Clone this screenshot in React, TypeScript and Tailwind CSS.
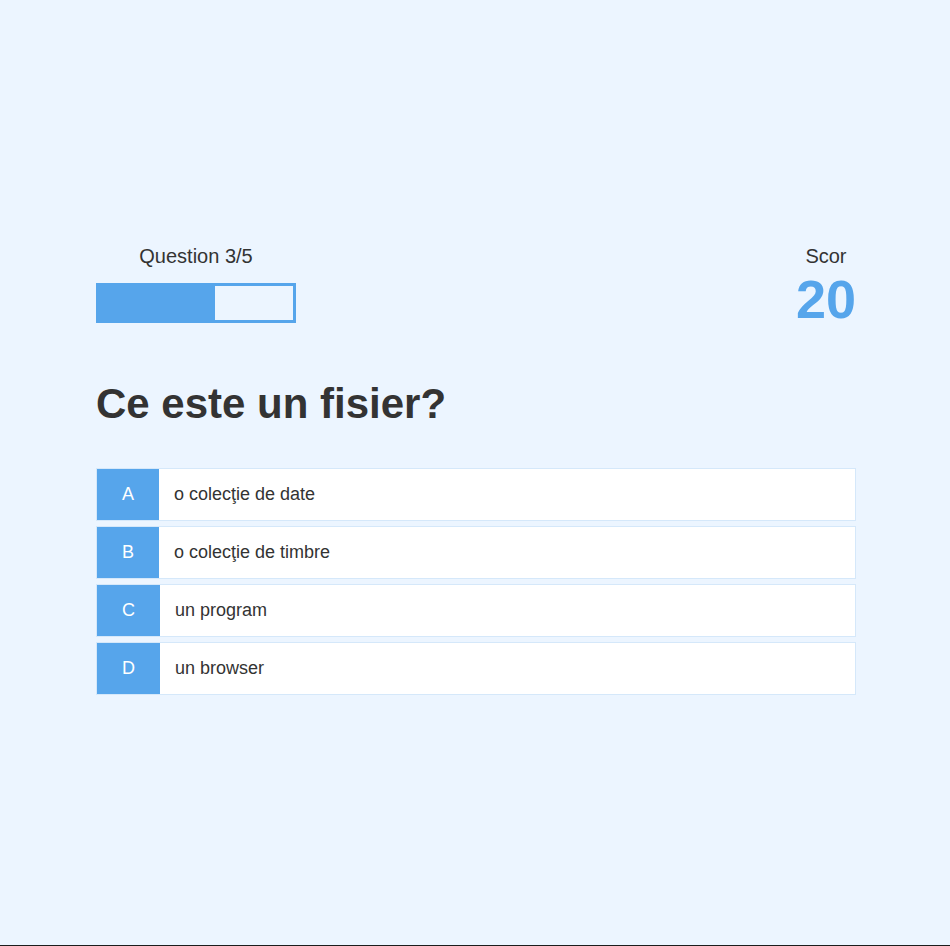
import React from "react";

const choices = [
  { prefix: "A", text: "o colecţie de date" },
  { prefix: "B", text: "o colecţie de timbre" },
  { prefix: "C", text: "un program" },
  { prefix: "D", text: "un browser" },
];

const App = () => {
  const progress = 60;

  return (
    <div
      className="h-[946px] w-full bg-[#ecf5ff] pl-[2px] border-b border-[#1c1c1c] text-[#333] font-['Liberation_Sans',Arial,sans-serif]"
    >
      <div className="mx-auto flex h-full max-w-[800px] flex-col justify-center p-5">
        {/* HUD */}
        <div className="flex justify-between">
          <div>
            <p className="text-center text-[20px] leading-[23px]">Question 3/5</p>
            <div className="mt-[15px] h-10 w-[200px] border-[3px] border-[#56a5eb]">
              <div className="h-full bg-[#56a5eb]" style={{ width: `${progress}%` }} />
            </div>
          </div>
          <div>
            <p className="text-center text-[20px] leading-[23px]">Scor</p>
            <h1 className="mb-[50px] text-center text-[54px] font-bold leading-[62px] text-[#56a5eb]">
              20
            </h1>
          </div>
        </div>

        {/* Intrebare */}
        <h2 className="mb-10 text-[42px] font-bold leading-[48px]">Ce este un fisier?</h2>

        {choices.map((c) => (
          <div
            key={c.prefix}
            className="mb-[5px] flex w-full border border-[rgba(86,165,235,0.25)] bg-white text-[18px] leading-[21px]"
          >
            <p className="bg-[#56a5eb] px-[25px] py-[15px] text-white">{c.prefix}</p>
            <p className="w-full p-[15px]">{c.text}</p>
          </div>
        ))}
      </div>
    </div>
  );
};

export default App;
